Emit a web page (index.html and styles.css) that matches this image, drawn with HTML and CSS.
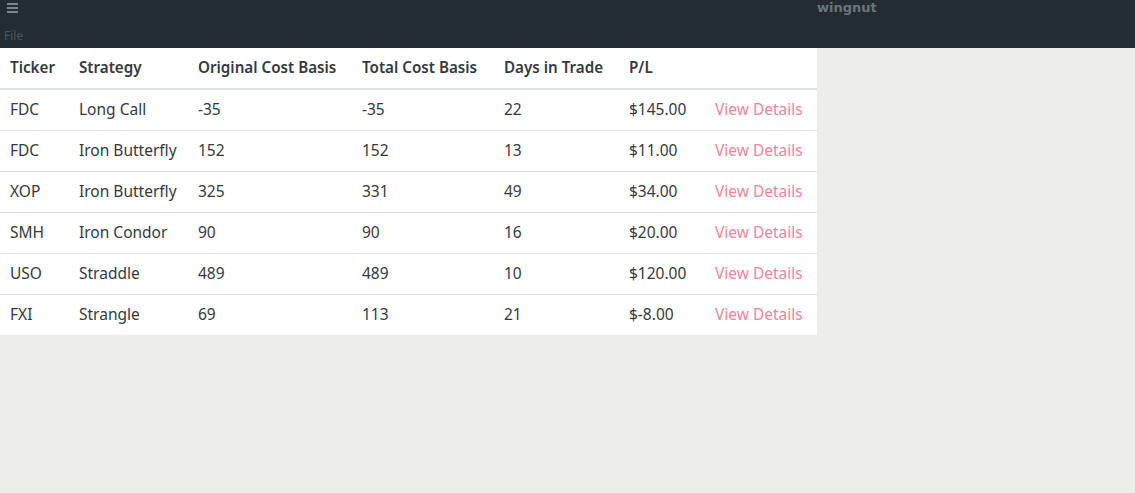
FILE: index.html
```html
<!DOCTYPE html>
<html>
<head>
<meta charset="utf-8">
<link rel="stylesheet" href="styles.css">
</head>
<body>
<header class="topbar">
  <div class="titlebar">
    <span class="burger"><i></i><i></i><i></i></span>
    <span class="title">wingnut</span>
  </div>
  <div class="menubar"><span class="menu-item">File</span></div>
</header>
<main class="content">
  <table class="trades">
    <colgroup>
      <col class="c1"><col class="c2"><col class="c3"><col class="c4"><col class="c5"><col class="c6"><col class="c7">
    </colgroup>
    <thead>
      <tr><th>Ticker</th><th>Strategy</th><th>Original Cost Basis</th><th>Total Cost Basis</th><th>Days in Trade</th><th>P/L</th><th></th></tr>
    </thead>
    <tbody>
      <tr><td>FDC</td><td>Long Call</td><td>-35</td><td>-35</td><td>22</td><td>$145.00</td><td><a class="link">View Details</a></td></tr>
      <tr><td>FDC</td><td>Iron Butterfly</td><td>152</td><td>152</td><td>13</td><td>$11.00</td><td><a class="link">View Details</a></td></tr>
      <tr><td>XOP</td><td>Iron Butterfly</td><td>325</td><td>331</td><td>49</td><td>$34.00</td><td><a class="link">View Details</a></td></tr>
      <tr><td>SMH</td><td>Iron Condor</td><td>90</td><td>90</td><td>16</td><td>$20.00</td><td><a class="link">View Details</a></td></tr>
      <tr><td>USO</td><td>Straddle</td><td>489</td><td>489</td><td>10</td><td>$120.00</td><td><a class="link">View Details</a></td></tr>
      <tr><td>FXI</td><td>Strangle</td><td>69</td><td>113</td><td>21</td><td>$-8.00</td><td><a class="link">View Details</a></td></tr>
    </tbody>
  </table>
</main>
</body>
</html>
```
FILE: styles.css
```css
html, body {
  margin: 0;
  padding: 0;
  height: 100%;
}
body {
  background: #eeeee9;
  font-family: "Noto Sans", "Open Sans", sans-serif;
}
.topbar {
  background: #232c32;
  height: 48px;
  display: flex;
  flex-direction: column;
}
.titlebar {
  height: 20px;
  display: flex;
  align-items: flex-start;
}
.burger {
  display: flex;
  flex-direction: column;
  gap: 2px;
  margin: 3px 0 0 7px;
}
.burger i {
  display: block;
  width: 11px;
  height: 2px;
  background: #7b868e;
}
.title {
  font-family: "DejaVu Sans", sans-serif;
  font-weight: bold;
  font-size: 13px;
  color: #6c757c;
  margin-left: 799px;
  line-height: 16px;
}
.menubar {
  height: 28px;
  display: flex;
  align-items: center;
  padding-left: 4px;
}
.menu-item {
  font-family: "Noto Sans", sans-serif;
  font-size: 12px;
  color: #4b555c;
  margin-top: 2px;
}
.content {
  display: block;
}
.trades {
  width: 817px;
  table-layout: fixed;
  border-collapse: collapse;
  background: #fff;
  color: #343a40;
  font-size: 15.5px;
}
.c1 { width: 69px; }
.c2 { width: 119px; }
.c3 { width: 164px; }
.c4 { width: 142px; }
.c5 { width: 125px; }
.c6 { width: 86px; }
.c7 { width: 112px; }
.trades th, .trades td {
  text-align: left;
  padding: 7px 10px 9px;
  line-height: 24px;
  white-space: nowrap;
  overflow: visible;
}
.trades th {
  font-weight: 600;
  font-size: 15.2px;
  height: 24px;
  border-bottom: 2px solid #dee2e6;
}
.trades tbody td {
  border-top: 1px solid #dee2e6;
  font-weight: 400;
}
.trades tbody tr:first-child td {
  border-top: none;
}
.link {
  color: #f3849a;
  cursor: pointer;
}
```
